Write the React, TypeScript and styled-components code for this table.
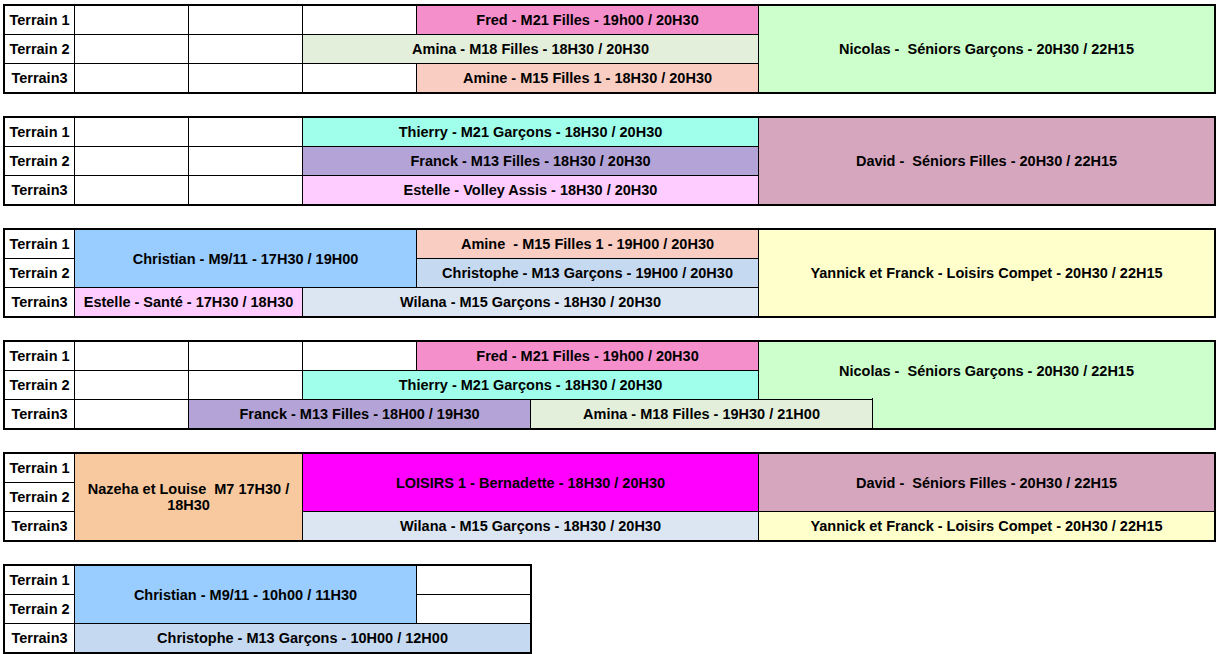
import React from 'react';
import styled, { createGlobalStyle } from 'styled-components';

const GlobalStyle = createGlobalStyle`
  html, body {
    margin: 0;
    padding: 0;
    background: #fff;
  }
  body {
    font-family: "Liberation Sans", Arial, sans-serif;
    color: #000;
  }
`;

type Slot = {
  r: number;
  c: number;
  rs?: number;
  cs?: number;
  text?: string;
  bg?: string;
  noTop?: boolean;
};

type Planning = {
  cols: number;
  slots: Slot[];
};

const C = {
  fred: '#f48fcb',
  amina: '#e3efda',
  amine: '#f9cdc2',
  nicolas: '#ccffcc',
  thierry: '#9fffeb',
  franck: '#b3a3d7',
  estelle: '#ffccff',
  david: '#d5a6bd',
  christian: '#99ccff',
  christophe: '#c5d9f1',
  wilana: '#dce6f2',
  yannick: '#ffffcc',
  nazeha: '#f8c99e',
  loisirs: '#ff00ff',
};

const plannings: Planning[] = [
  {
    cols: 10,
    slots: [
      { r: 1, c: 4, cs: 3, text: 'Fred - M21 Filles - 19h00 / 20H30', bg: C.fred },
      { r: 2, c: 3, cs: 4, text: 'Amina - M18 Filles - 18H30 / 20H30', bg: C.amina },
      { r: 3, c: 4, cs: 3, text: 'Amine - M15 Filles 1 - 18H30 / 20H30', bg: C.amine },
      { r: 1, c: 7, rs: 3, cs: 4, text: 'Nicolas -  Séniors Garçons - 20H30 / 22H15', bg: C.nicolas },
    ],
  },
  {
    cols: 10,
    slots: [
      { r: 1, c: 3, cs: 4, text: 'Thierry - M21 Garçons - 18H30 / 20H30', bg: C.thierry },
      { r: 2, c: 3, cs: 4, text: 'Franck - M13 Filles - 18H30 / 20H30', bg: C.franck },
      { r: 3, c: 3, cs: 4, text: 'Estelle - Volley Assis - 18H30 / 20H30', bg: C.estelle },
      { r: 1, c: 7, rs: 3, cs: 4, text: 'David -  Séniors Filles - 20H30 / 22H15', bg: C.david },
    ],
  },
  {
    cols: 10,
    slots: [
      { r: 1, c: 1, rs: 2, cs: 3, text: 'Christian - M9/11 - 17H30 / 19H00', bg: C.christian },
      { r: 1, c: 4, cs: 3, text: 'Amine  - M15 Filles 1 - 19H00 / 20H30', bg: C.amine },
      { r: 2, c: 4, cs: 3, text: 'Christophe - M13 Garçons - 19H00 / 20H30', bg: C.christophe },
      { r: 3, c: 1, cs: 2, text: 'Estelle - Santé - 17H30 / 18H30', bg: C.estelle },
      { r: 3, c: 3, cs: 4, text: 'Wilana - M15 Garçons - 18H30 / 20H30', bg: C.wilana },
      { r: 1, c: 7, rs: 3, cs: 4, text: 'Yannick et Franck - Loisirs Compet - 20H30 / 22H15', bg: C.yannick },
    ],
  },
  {
    cols: 10,
    slots: [
      { r: 1, c: 4, cs: 3, text: 'Fred - M21 Filles - 19h00 / 20H30', bg: C.fred },
      { r: 2, c: 3, cs: 4, text: 'Thierry - M21 Garçons - 18H30 / 20H30', bg: C.thierry },
      { r: 3, c: 2, cs: 3, text: 'Franck - M13 Filles - 18H00 / 19H30', bg: C.franck },
      { r: 3, c: 5, cs: 3, text: 'Amina - M18 Filles - 19H30 / 21H00', bg: C.amina },
      { r: 1, c: 7, rs: 2, cs: 4, text: 'Nicolas -  Séniors Garçons - 20H30 / 22H15', bg: C.nicolas },
      { r: 3, c: 8, cs: 3, bg: C.nicolas, noTop: true },
    ],
  },
  {
    cols: 10,
    slots: [
      { r: 1, c: 1, rs: 3, cs: 2, text: 'Nazeha et Louise  M7 17H30 / 18H30', bg: C.nazeha },
      { r: 1, c: 3, rs: 2, cs: 4, text: 'LOISIRS 1 - Bernadette - 18H30 / 20H30', bg: C.loisirs },
      { r: 3, c: 3, cs: 4, text: 'Wilana - M15 Garçons - 18H30 / 20H30', bg: C.wilana },
      { r: 1, c: 7, rs: 2, cs: 4, text: 'David -  Séniors Filles - 20H30 / 22H15', bg: C.david },
      { r: 3, c: 7, cs: 4, text: 'Yannick et Franck - Loisirs Compet - 20H30 / 22H15', bg: C.yannick },
    ],
  },
  {
    cols: 4,
    slots: [
      { r: 1, c: 1, rs: 2, cs: 3, text: 'Christian - M9/11 - 10h00 / 11H30', bg: C.christian },
      { r: 3, c: 1, cs: 4, text: 'Christophe - M13 Garçons - 10H00 / 12H00', bg: C.christophe },
    ],
  },
];

const TERRAINS = ['Terrain 1', 'Terrain 2', 'Terrain3'];

// fill the cells nobody booked so every slot gets its borders
const withEmpties = (p: Planning): Slot[] => {
  const taken = new Set<string>();
  p.slots.forEach((s) => {
    for (let r = s.r; r < s.r + (s.rs || 1); r++)
      for (let c = s.c; c < s.c + (s.cs || 1); c++) taken.add(`${r}-${c}`);
  });
  const empties: Slot[] = [];
  for (let r = 1; r <= 3; r++)
    for (let c = 1; c <= p.cols; c++) if (!taken.has(`${r}-${c}`)) empties.push({ r, c });
  return [...p.slots, ...empties];
};

const Page = styled.div`
  display: flex;
  flex-direction: column;
  align-items: flex-start;
  gap: 22px;
  padding: 4px 0 0 3px;
`;

const Frame = styled.div`
  border: 2px solid #000;
  overflow: hidden;
  background: #fff;
`;

const Grid = styled.div<{ $cols: number }>`
  display: grid;
  grid-template-columns: 70px repeat(${(p) => p.$cols}, 114px);
  grid-auto-rows: 29px;
  margin: -1px 0 0 -1px;
`;

const Label = styled.div<{ $row: number }>`
  grid-column: 1;
  grid-row: ${(p) => p.$row};
  display: flex;
  align-items: center;
  justify-content: center;
  border-left: 1px solid #000;
  border-top: 1px solid #000;
  font-size: 14.5px;
  font-weight: bold;
  white-space: nowrap;
`;

const Cell = styled.div<{ $r: number; $c: number; $rs: number; $cs: number; $bg: string; $noTop: boolean }>`
  grid-row: ${(p) => p.$r} / span ${(p) => p.$rs};
  grid-column: ${(p) => p.$c + 1} / span ${(p) => p.$cs};
  display: flex;
  align-items: center;
  justify-content: center;
  text-align: center;
  background: ${(p) => p.$bg};
  border-left: 1px solid #000;
  border-top: 1px solid #000;
  ${(p) => (p.$noTop ? 'margin-top: -1px; border-top: none; padding-top: 1px;' : '')}
  font-size: 14.5px;
  font-weight: bold;
  line-height: 16px;
  white-space: pre-wrap;
  padding-left: 2px;
  padding-right: 2px;
`;

const Schedule = ({ planning }: { planning: Planning }) => (
  <Frame>
    <Grid $cols={planning.cols}>
      {TERRAINS.map((t, i) => (
        <Label key={t} $row={i + 1}>{t}</Label>
      ))}
      {withEmpties(planning).map((s) => (
        <Cell
          key={`${s.r}-${s.c}`}
          $r={s.r}
          $c={s.c}
          $rs={s.rs || 1}
          $cs={s.cs || 1}
          $bg={s.bg || '#fff'}
          $noTop={!!s.noTop}
        >
          {s.text}
        </Cell>
      ))}
    </Grid>
  </Frame>
);

export default function App() {
  return (
    <>
      <GlobalStyle />
      <Page>
        {plannings.map((p, i) => (
          <Schedule key={i} planning={p} />
        ))}
      </Page>
    </>
  );
}
